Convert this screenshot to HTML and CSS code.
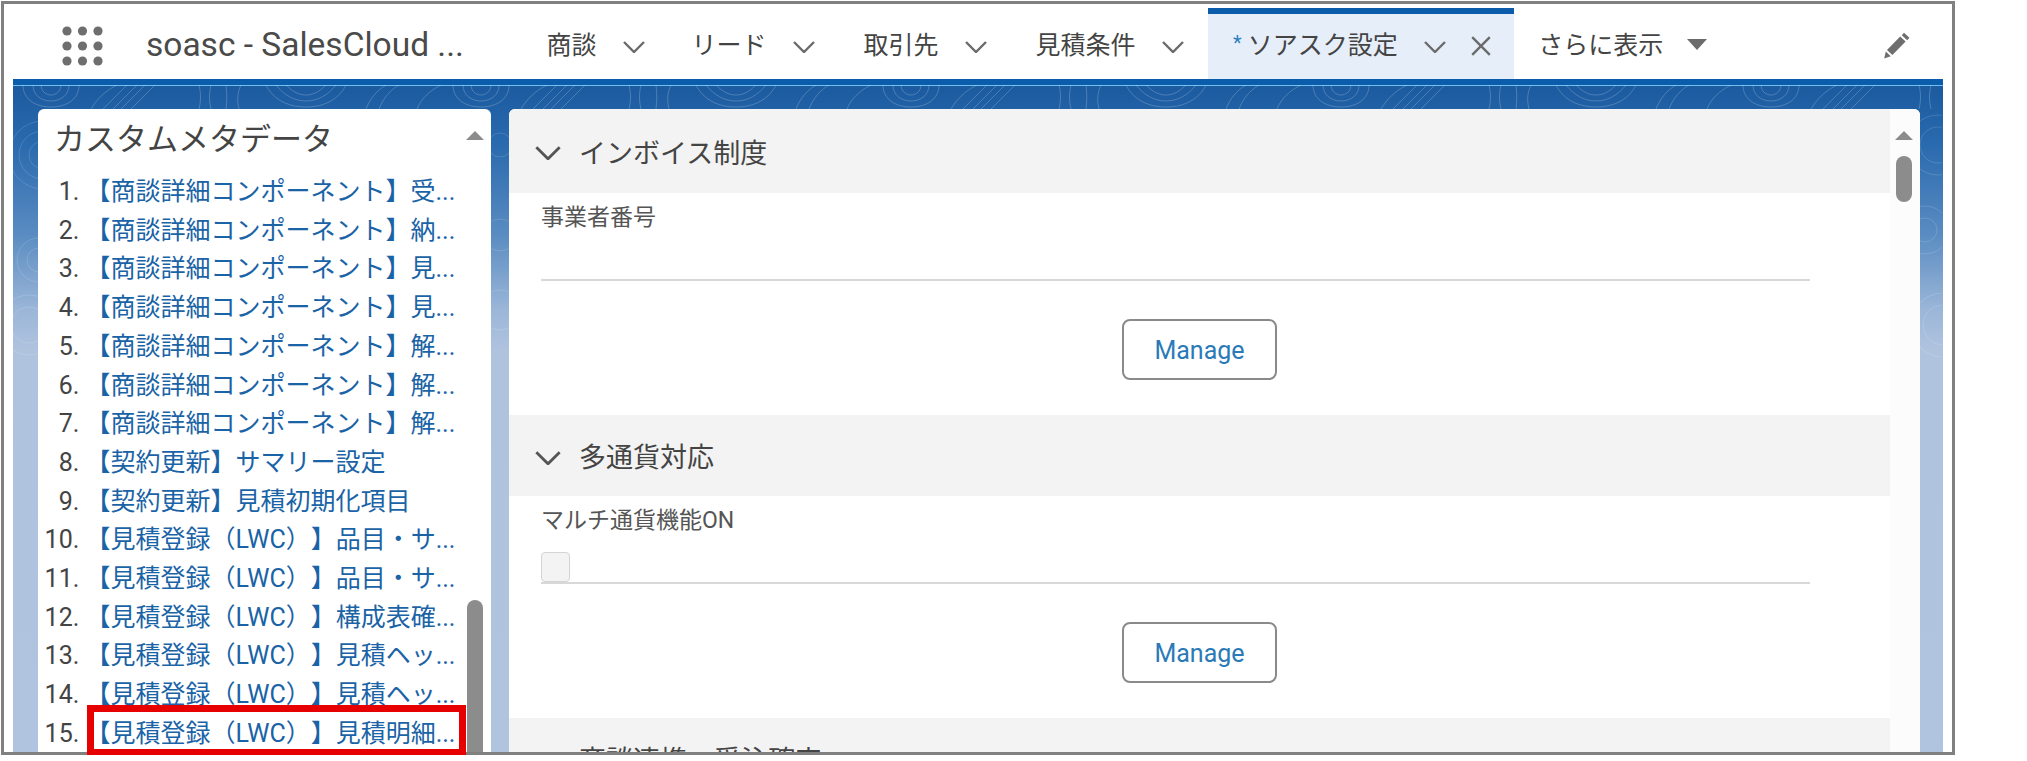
FILE: index.html
```html
<!DOCTYPE html>
<html lang="ja">
<head>
    <meta charset="UTF-8">
    <meta name="viewport" content="width=device-width, initial-scale=1.0">
    <title>soasc - SalesCloud</title>
    <link rel="stylesheet" href="styles.css">
</head>
<body>
    <div class="frame">
        <div class="app">
            <header class="nav">
                <svg class="launcher" viewBox="0 0 41 40" width="41" height="40">
                    <g fill="#6e6e6e">
                        <circle cx="5" cy="5" r="4.6"/><circle cx="20.5" cy="5" r="4.6"/><circle cx="36" cy="5" r="4.6"/>
                        <circle cx="5" cy="20" r="4.6"/><circle cx="20.5" cy="20" r="4.6"/><circle cx="36" cy="20" r="4.6"/>
                        <circle cx="5" cy="35" r="4.6"/><circle cx="20.5" cy="35" r="4.6"/><circle cx="36" cy="35" r="4.6"/>
                    </g>
                </svg>
                <div class="app-name">soasc - SalesCloud ...</div>
                <nav class="tabs">
                    <div class="tab tab-first">商談<svg class="chevron" viewBox="0 0 22 12"><path d="M1 1l10 10L21 1"/></svg></div>
                    <div class="tab">リード<svg class="chevron" viewBox="0 0 22 12"><path d="M1 1l10 10L21 1"/></svg></div>
                    <div class="tab">取引先<svg class="chevron" viewBox="0 0 22 12"><path d="M1 1l10 10L21 1"/></svg></div>
                    <div class="tab">見積条件<svg class="chevron" viewBox="0 0 22 12"><path d="M1 1l10 10L21 1"/></svg></div>
                    <div class="tab tab-active">
                        <span class="dirty">*</span>ソアスク設定<svg class="chevron" viewBox="0 0 22 12"><path d="M1 1l10 10L21 1"/></svg>
                        <svg class="close" viewBox="0 0 20 20"><path d="M2 2l16 16M18 2L2 18"/></svg>
                    </div>
                    <div class="tab">さらに表示<span class="caret"></span></div>
                </nav>
                <svg class="pencil" viewBox="0 0 26 27" width="26" height="27">
                    <path fill="#6e6e6e" d="M20 .8l5.4 5-2.2 2.4-5.4-5zM16.2 4.6l5.4 5L8.4 23 3 18zM1.8 19.6l5 4.6-6.6 2.4z"/>
                </svg>
            </header>

            <main class="workspace">
                <!-- background contours, sits behind the cards -->
                <svg class="contours" width="1929" height="300">
                    <defs>
                        <pattern id="band" width="430" height="24" patternUnits="userSpaceOnUse" x="8">
                            <g fill="none" stroke="#fff" stroke-opacity=".2">
                                <path d="M2 0c0 14 12 22 28 22s28-8 28-22M12 0c0 10 8 16 18 16s18-6 18-16M20 0c0 6 5 10 10 10s10-4 10-10"/>
                                <path d="M70 24c6-10 14-18 26-24M82 24L106 0M92 24L116 0M100 24L124 0M110 24L134 0"/>
                                <path d="M178 24c2-8 2-16 0-24M190 24c-2-8-2-16 0-24M205 24c1-8 1-16 0-24M218 24c-2-8-2-16 2-24"/>
                                <path d="M245 0c8 16 24 22 40 22s32-6 40-22M255 0c8 10 18 16 30 16s22-6 30-16M265 0c6 6 12 10 20 10s14-4 20-10"/>
                                <path d="M345 24c4-10 10-18 20-24M358 24c4-10 10-18 20-24M396 24c4-10 12-18 24-24"/>
                            </g>
                        </pattern>
                    </defs>
                    <rect width="1929" height="24" fill="url(#band)"/>
                    <g fill="none" stroke="#fff" stroke-opacity=".14">
                        <circle cx="30" cy="70" r="14"/><circle cx="30" cy="70" r="24"/><circle cx="30" cy="70" r="34"/>
                        <circle cx="26" cy="175" r="12"/><circle cx="26" cy="175" r="22"/>
                        <circle cx="16" cy="240" r="18"/><circle cx="16" cy="240" r="30"/>
                        <circle cx="487" cy="60" r="12"/><circle cx="487" cy="150" r="16"/><circle cx="487" cy="225" r="20"/>
                        <circle cx="1925" cy="60" r="18"/><circle cx="1925" cy="60" r="30"/>
                        <circle cx="1912" cy="145" r="12"/><circle cx="1912" cy="145" r="24"/>
                        <circle cx="1930" cy="240" r="20"/><circle cx="1930" cy="240" r="32"/>
                    </g>
                </svg>

                <section class="card list-card">
                    <div class="list-main">
                        <h2 class="list-title">カスタムメタデータ</h2>
                        <ol class="meta-list">
                            <li><a>【商談詳細コンポーネント】受...</a></li>
                            <li><a>【商談詳細コンポーネント】納...</a></li>
                            <li><a>【商談詳細コンポーネント】見...</a></li>
                            <li><a>【商談詳細コンポーネント】見...</a></li>
                            <li><a>【商談詳細コンポーネント】解...</a></li>
                            <li><a>【商談詳細コンポーネント】解...</a></li>
                            <li><a>【商談詳細コンポーネント】解...</a></li>
                            <li><a>【契約更新】サマリー設定</a></li>
                            <li><a>【契約更新】見積初期化項目</a></li>
                            <li><a>【見積登録（LWC）】品目・サ...</a></li>
                            <li><a>【見積登録（LWC）】品目・サ...</a></li>
                            <li><a>【見積登録（LWC）】構成表確...</a></li>
                            <li><a>【見積登録（LWC）】見積ヘッ...</a></li>
                            <li><a>【見積登録（LWC）】見積ヘッ...</a></li>
                            <li><a>【見積登録（LWC）】見積明細...</a></li>
                        </ol>
                    </div>
                    <div class="scrollbar">
                        <span class="scroll-up"></span>
                        <span class="scroll-thumb list-thumb"></span>
                    </div>
                </section>

                <section class="card detail-card">
                    <div class="detail-main">
                        <div class="section-header section-first">
                            <svg class="chevron chevron-dark" viewBox="0 0 22 12"><path d="M1 1l10 10L21 1"/></svg>インボイス制度
                        </div>
                        <div class="section-body">
                            <div class="field-label">事業者番号</div>
                            <div class="field-value"></div>
                            <button class="manage">Manage</button>
                        </div>

                        <div class="section-header">
                            <svg class="chevron chevron-dark" viewBox="0 0 22 12"><path d="M1 1l10 10L21 1"/></svg>多通貨対応
                        </div>
                        <div class="section-body">
                            <div class="field-label">マルチ通貨機能ON</div>
                            <div class="field-value"><span class="checkbox"></span></div>
                            <button class="manage">Manage</button>
                        </div>

                        <div class="section-header">
                            <svg class="chevron chevron-dark" viewBox="0 0 22 12"><path d="M1 1l10 10L21 1"/></svg>商談連携・受注確定
                        </div>
                    </div>
                    <div class="scrollbar detail-scroll">
                        <span class="scroll-up"></span>
                        <span class="scroll-thumb detail-thumb"></span>
                    </div>
                </section>
            </main>
        </div>
        <div class="highlight"></div>
    </div>
</body>
</html>
```

FILE: styles.css
```css
* {
    margin: 0;
    padding: 0;
    box-sizing: border-box;
}

body {
    font-family: Roboto, "Noto Sans CJK JP", sans-serif;
    background-color: #fff;
    color: #444;
    text-spacing-trim: space-all;
}

.frame {
    position: relative;
    width: 1954px;
    height: 754px;
    margin: 1px 0 0 1px;
    border: 3px solid #808080;
}

.app {
    display: flex;
    flex-direction: column;
    height: 100%;
    margin: 0 9px;
    overflow: hidden;
}

/* Top nav */
.nav {
    display: flex;
    align-items: center;
    flex-shrink: 0;
    height: 75px;
    background: #fff;
    padding-left: 49px;
}

.launcher {
    flex-shrink: 0;
    margin-top: 9px;
}

.app-name {
    width: 376px;
    margin: 5px 0 0 43px;
    font-size: 33.5px;
    color: #4a4a4a;
    white-space: nowrap;
}

.tabs {
    display: flex;
    align-self: stretch;
    flex-grow: 1;
}

.tab {
    display: flex;
    align-items: center;
    padding: 3px 24.5px 0;
    font-size: 25px;
    white-space: nowrap;
}

.tab-first {
    padding-right: 22.5px;
}

.chevron {
    width: 22px;
    height: 12px;
    margin: 7px 0 0 26px;
    fill: none;
    stroke: #6b6b6b;
    stroke-width: 2.4;
}

.tab-active {
    margin-top: 4px;
    padding: 0 22px 7px 25px;
    background: #e6eff9;
    border-top: 6px solid #0b5cab;
}

.dirty {
    margin-right: 6px;
    color: #2b7fc0;
    font-size: 20px;
}

.close {
    width: 22px;
    height: 22px;
    margin: 5px 0 0 24px;
    fill: none;
    stroke: #6b6b6b;
    stroke-width: 2.2;
}

.caret {
    width: 0;
    height: 0;
    margin: 3px 0 0 24px;
    border-left: 10px solid transparent;
    border-right: 10px solid transparent;
    border-top: 11px solid #6b6b6b;
}

.pencil {
    flex-shrink: 0;
    margin: 8px 33px 0 0;
}

/* Workspace */
.workspace {
    position: relative;
    display: flex;
    gap: 18px;
    flex-grow: 1;
    min-height: 0;
    padding: 24px 23px 0 25px;
    border-top: 6px solid #0b5cab;
    background: linear-gradient(180deg, #1b5a9f 0, #2a6aae 60px, #5a8cc2 150px, #9bb6d8 225px, #afc3df 265px, #b0c4e0 100%);
    box-shadow: inset 0 1px 0 #6fc0ee;
}

.contours {
    position: absolute;
    top: 0;
    left: 0;
}

.card {
    position: relative;
    display: flex;
    background: #fff;
    border-radius: 6px 6px 0 0;
    overflow: hidden;
}

/* Left list */
.list-card {
    flex: 0 0 453px;
}

.list-main {
    flex-grow: 1;
    min-width: 0;
}

.list-title {
    padding: 11px 0 0 16px;
    font-size: 31px;
    font-weight: 400;
    line-height: 40px;
    color: #444;
}

.meta-list {
    margin-top: 13px;
    padding-left: 47.5px;
    font-size: 25px;
    line-height: 38.7px;
}

.meta-list li {
    white-space: nowrap;
}

.meta-list a {
    color: #1a63a6;
}

.scrollbar {
    display: flex;
    flex-direction: column;
    align-items: center;
    flex-shrink: 0;
    width: 18px;
    margin-right: 7px;
}

.scroll-up {
    flex-shrink: 0;
    width: 0;
    height: 0;
    margin-top: 22px;
    border-left: 9px solid transparent;
    border-right: 9px solid transparent;
    border-bottom: 9px solid #8c8c8c;
}

.scroll-thumb {
    flex-shrink: 0;
    width: 16px;
    background: #8c8c8c;
    border-radius: 8px;
}

.list-thumb {
    height: 200px;
    margin-top: 460px;
}

/* Right detail */
.detail-card {
    flex-grow: 1;
    min-width: 0;
}

.detail-main {
    flex-grow: 1;
    min-width: 0;
}

.section-header {
    display: flex;
    align-items: center;
    height: 81px;
    padding-left: 26px;
    background: #f3f3f3;
    font-size: 27px;
    color: #444;
}

.section-first {
    height: 84px;
}

.chevron-dark {
    width: 26px;
    height: 14px;
    margin: 4px 18px 0 0;
    stroke: #555;
    stroke-width: 2.4;
}

.section-body {
    height: 222px;
    padding-top: 9px;
    text-align: center;
}

.field-label {
    margin-left: 32px;
    font-size: 23px;
    line-height: 31px;
    text-align: left;
    color: #555;
}

.field-value {
    display: flex;
    align-items: flex-end;
    height: 48px;
    margin: 0 80px 0 32px;
    border-bottom: 2px solid #d8d8d8;
}

.checkbox {
    width: 29px;
    height: 30px;
    background: #f3f3f3;
    border: 1px solid #d4d4d4;
    border-radius: 4px;
}

.manage {
    width: 155px;
    height: 61px;
    margin-top: 38px;
    padding-top: 2px;
    background: #fff;
    border: 2px solid #8a8a8a;
    border-radius: 8px;
    font-family: inherit;
    font-size: 25px;
    color: #2a7ab8;
}

.detail-scroll {
    width: 30px;
    margin-right: 0;
    padding-left: 5px;
    padding-right: 7px;
    background: #fcfcfc;
}

.detail-thumb {
    height: 46px;
    margin-top: 16px;
}

/* Annotation over the 15th row */
.highlight {
    position: absolute;
    left: 83px;
    top: 701px;
    width: 379px;
    height: 51px;
    border: 7px solid #e60000;
}
```
